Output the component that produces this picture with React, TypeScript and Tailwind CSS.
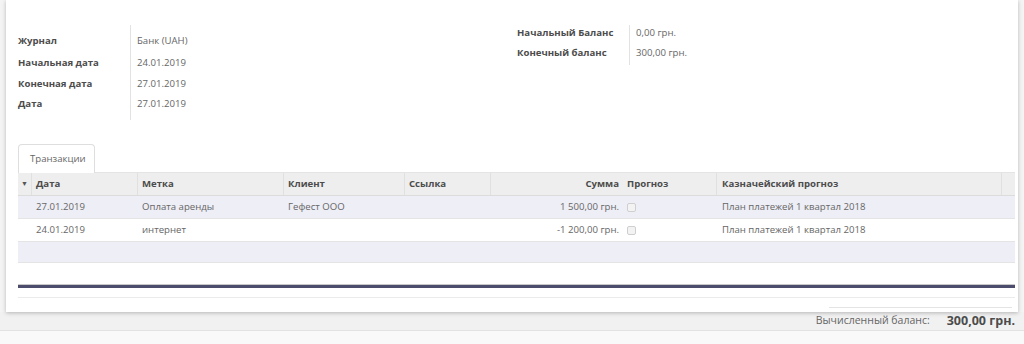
import React from "react";

const LEFT_FIELDS = [
    { label: "Журнал", value: "Банк (UAH)", h: "h-[22px]" },
    { label: "Начальная дата", value: "24.01.2019", h: "h-[22px]" },
    { label: "Конечная дата", value: "27.01.2019", h: "h-[20px]" },
    { label: "Дата", value: "27.01.2019", h: "h-[20px]" },
];

const RIGHT_FIELDS = [
    { label: "Начальный Баланс", value: "0,00 грн.", h: "h-[20px]" },
    { label: "Конечный баланс", value: "300,00 грн.", h: "h-[20px]" },
];

const ROWS = [
    { date: "27.01.2019", label: "Оплата аренды", partner: "Гефест ООО", amount: "1 500,00 грн.", plan: "План платежей 1 квартал 2018" },
    { date: "24.01.2019", label: "интернет", partner: "", amount: "-1 200,00 грн.", plan: "План платежей 1 квартал 2018" },
];

type Field = { label: string; value: string; h: string };

function FieldGroup({ fields }: { fields: Field[] }) {
    return (
        <div className="flex">
            <div className="w-[112px] flex flex-col">
                {fields.map((f) => (
                    <div key={f.label} className={`${f.h} flex items-center font-bold text-[#4c4c4c] whitespace-nowrap`}>
                        {f.label}
                    </div>
                ))}
            </div>
            <div className="flex flex-col pl-[7px]">
                {fields.map((f) => (
                    <div key={f.label} className={`${f.h} flex items-center text-[#666] whitespace-nowrap`}>
                        {f.value}
                    </div>
                ))}
            </div>
        </div>
    );
}

function Checkbox() {
    return <span className="inline-block w-[9px] h-[9px] border border-[#cfcfcf] rounded-[2px] bg-[#f3f3f3]" />;
}

export default function App() {
    return (
        <div
            className="w-[1024px] h-[344px] overflow-hidden bg-[#f4f4f4] flex flex-col text-[9.6px]"
            style={{ fontFamily: '"Open Sans", "Liberation Sans", sans-serif' }}
        >
            <div className="mx-[6px] w-[1012px] h-[312px] shrink-0 bg-white shadow-[0_1px_4px_rgba(0,0,0,0.25)] pl-[12px] pr-[3px] flex flex-col relative z-10">
                <div className="flex pt-[25px]">
                    <div className="w-[499px] relative">
                        <div className="absolute left-[112px] top-0 h-[95px] border-l border-[#e2e2e2]" />
                        <div className="pt-[5px]">
                            <FieldGroup fields={LEFT_FIELDS} />
                        </div>
                    </div>
                    <div className="relative">
                        <div className="absolute left-[112px] top-0 h-[40px] border-l border-[#e2e2e2]" />
                        <div className="-mt-[2px]">
                            <FieldGroup fields={RIGHT_FIELDS} />
                        </div>
                    </div>
                </div>

                <div className="mt-[29px] flex">
                    <div className="w-[77px] h-[29px] border border-b-0 border-[#dedede] rounded-t-[4px] flex items-center pl-[11px] text-[#666] relative top-[1px] bg-white">
                        Транзакции
                    </div>
                </div>

                <div className="w-[997px] border-t border-[#e4e4e4]">
                    <div className="flex h-[23px] bg-[#eeeeee] border-b border-[#dcdcdc] font-bold text-[#4c4c4c] items-center">
                        <div className="w-[14px] h-full flex items-center justify-center border-r border-[#e0e0e0]">
                            <span className="text-[7px] text-[#555]">▼</span>
                        </div>
                        <div className="w-[105px] pl-[4px]">Дата</div>
                        <div className="w-[146px] h-full flex items-center pl-[4px] border-l border-[#e0e0e0]">Метка</div>
                        <div className="w-[121px] h-full flex items-center pl-[4px] border-l border-[#e0e0e0]">Клиент</div>
                        <div className="w-[86px] h-full flex items-center pl-[4px] border-l border-[#e0e0e0]">Ссылка</div>
                        <div className="w-[133px] h-full flex items-center justify-end pr-[4px] border-l border-[#e0e0e0]">Сумма</div>
                        <div className="w-[93px] h-full flex items-center pl-[4px]">Прогноз</div>
                        <div className="w-[285px] h-full flex items-center pl-[5px] border-l border-[#e0e0e0]">Казначейский прогноз</div>
                        <div className="flex-1 h-full border-l border-[#e0e0e0]" />
                    </div>
                    {ROWS.map((r, i) => (
                        <div key={i} className={`flex h-[23px] items-center text-[#666] border-b border-[#e4e4e4] ${i % 2 === 0 ? "bg-[#eeeef6]" : "bg-white"}`}>
                            <div className="w-[14px]" />
                            <div className="w-[105px] pl-[4px]">{r.date}</div>
                            <div className="w-[146px] pl-[5px]">{r.label}</div>
                            <div className="w-[121px] pl-[5px]">{r.partner}</div>
                            <div className="w-[86px]" />
                            <div className="w-[133px] text-right pr-[4px]">{r.amount}</div>
                            <div className="w-[93px] pl-[4px] flex items-center"><Checkbox /></div>
                            <div className="w-[285px] pl-[6px]">{r.plan}</div>
                        </div>
                    ))}
                    <div className="h-[21px] bg-[#eeeef6] border-b border-[#e4e4e4]" />
                    <div className="h-[21px]" />
                    <div className="border-t border-[#c8c8c8] h-[4px] bg-[#4c4c6c]" />
                    <div className="h-[10px] border-b border-[#ebebeb]" />
                </div>
                <div className="flex justify-end pr-[3px] mt-[9px]">
                    <div className="w-[183px] border-t border-[#e4e4e4]" />
                </div>
            </div>

            <div className="h-[19px] shrink-0 flex items-center justify-end pr-[9px] border-b border-[#e2e2e2] bg-[#f1f1f1]">
                <span className="text-[#666] text-[10.5px] mr-[17px]">Вычисленный баланс:</span>
                <span className="text-[#4c4c4c] font-bold text-[12.5px]">300,00 грн.</span>
            </div>
            <div className="flex-1 bg-[#f9f9f9]" />
        </div>
    );
}
